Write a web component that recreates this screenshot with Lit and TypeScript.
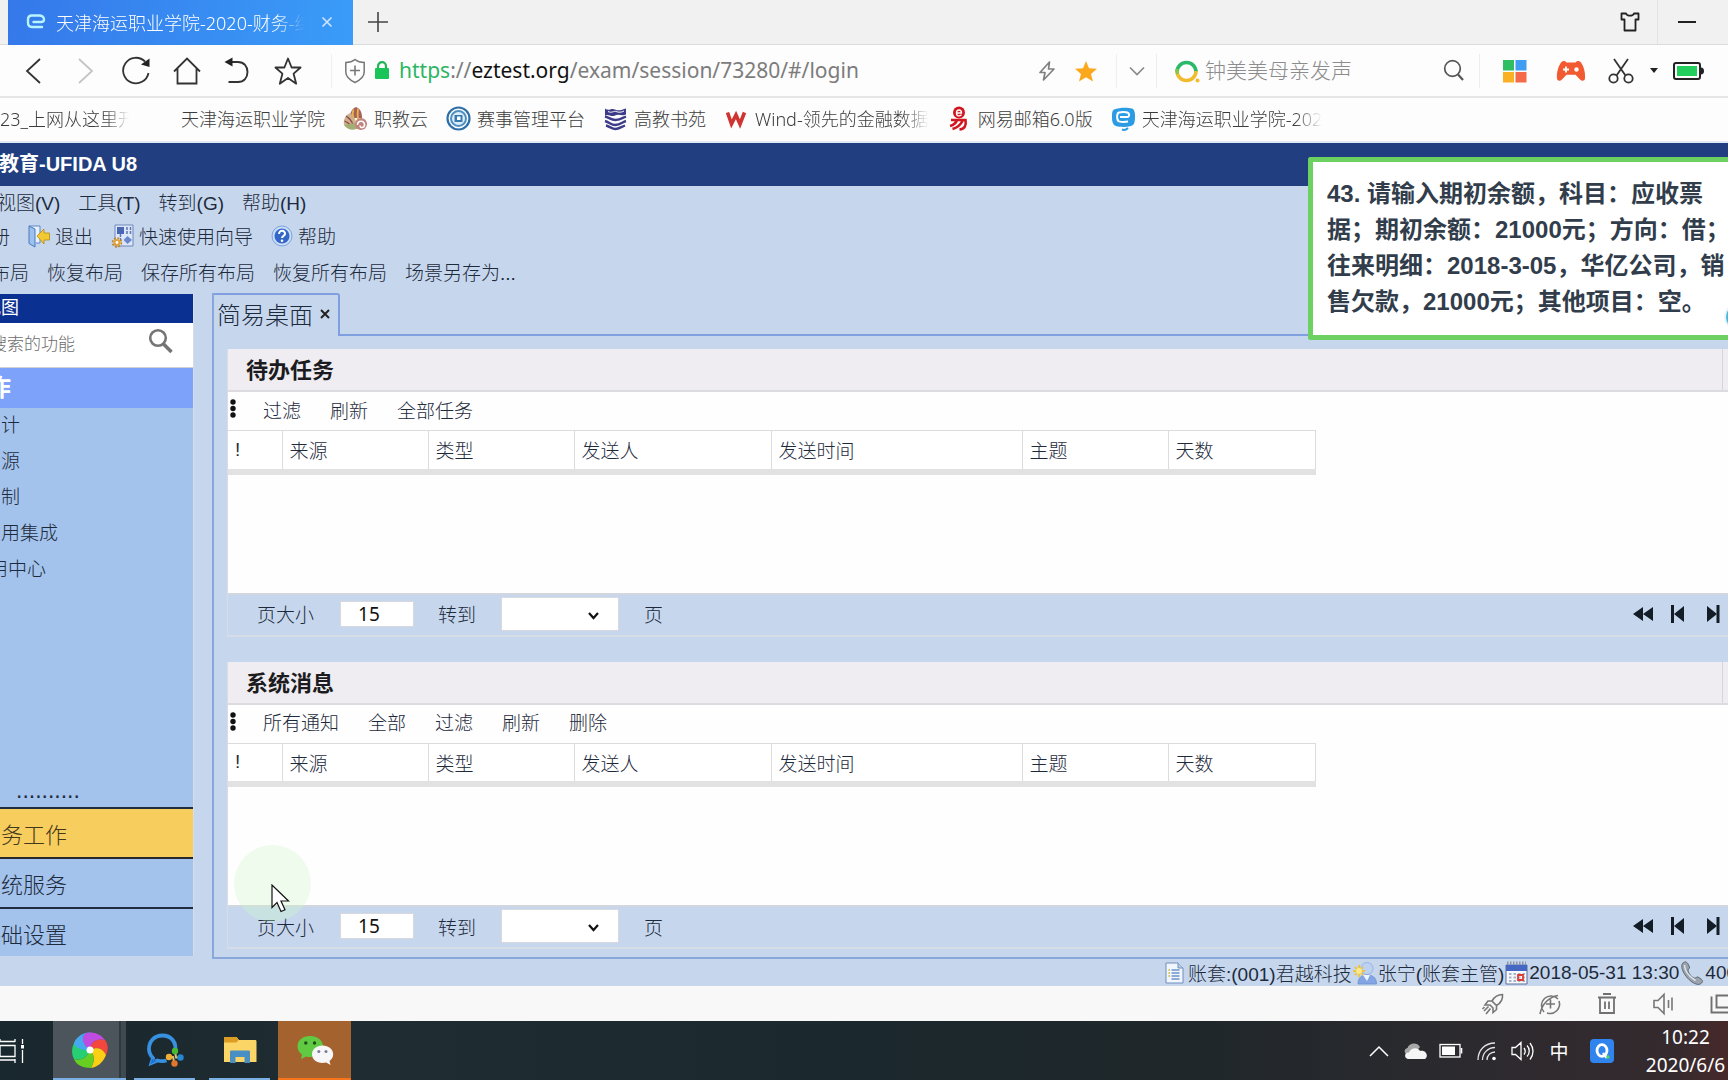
import { LitElement, html, svg, css, nothing } from "lit";
import type { TemplateResult } from "lit";
import { customElement, property } from "lit/decorators.js";

const icon = (w: number, h: number, body: TemplateResult) =>
  html`<svg width=${w} height=${h} viewBox="0 0 ${w} ${h}" fill="none" aria-hidden="true">${body}</svg>`;

const ic = {
  tabLogo: icon(20, 20, svg`<path d="M15 10H7.500M15 10c2.500 0 3-1 3-2.500C18 4.500 16 3.500 13 3.500H6C3 3.500 2 5 2 7.500v3c0 3 1.500 4.500 4 4.500h10" stroke="#b8f4ff" stroke-width="2.400" stroke-linecap="round"/>`),
  close: icon(12, 12, svg`<path d="M1.500 1.500l9 9m0-9l-9 9" stroke="#cfe6ff" stroke-width="1.600"/>`),
  plus: icon(20, 20, svg`<path d="M10 0v20M0 10h20" stroke="#444" stroke-width="1.600"/>`),
  shirt: icon(22, 22, svg`<path d="M7 2.500H2.500v6h3v11h11v-11h3v-6H15c-.5 1.500-2 2.200-4 2.200S7.500 4 7 2.500z" stroke="#222" stroke-width="1.800" stroke-linejoin="round"/>`),
  min: icon(18, 4, svg`<path d="M0 2h18" stroke="#222" stroke-width="2"/>`),
  back: icon(30, 30, svg`<path d="M21 3L8 15l13 12" stroke="#333" stroke-width="1.800"/>`),
  fwd: icon(30, 30, svg`<path d="M9 3l13 12L9 27" stroke="#c4c4c4" stroke-width="1.800"/>`),
  reload: icon(30, 30, svg`<path d="M27.500 17A12.800 12.800 0 1 1 24 5.500" stroke="#333" stroke-width="1.800"/><path d="M20 8.500l8.500-6v8.500z" fill="#222"/>`),
  home: icon(30, 30, svg`<path d="M2 15.500L15 2.500l13 13M5.500 12.500v15h19v-15" stroke="#333" stroke-width="1.800"/>`),
  undo: icon(30, 30, svg`<path d="M6 6h9c6 0 9.500 4.500 9.500 10s-3.500 10-9.500 10H5.500" stroke="#333" stroke-width="1.900"/><path d="M1.500 6L9.500 1.500v9z" fill="#222"/>`),
  star: icon(30, 30, svg`<path d="M14 2.500l3.600 9h9l-7 6.200 2.600 10-8.200-5.700-8.200 5.700 2.600-10-7-6.200h9z" stroke="#333" stroke-width="1.800" stroke-linejoin="round"/>`),
  shield: icon(22, 26, svg`<path d="M11 1.500c2.500 2 6 3 9.200 3v9.500c0 5-5 8.500-9.200 10.500-4.200-2-9.200-5.500-9.200-10.500V4.500c3.200 0 6.700-1 9.200-3z" stroke="#777" stroke-width="1.500"/><path d="M11 7.500v10M6 12.500h10" stroke="#777" stroke-width="1.600"/>`),
  lock: icon(16, 20, svg`<path d="M4 9V6.200a4 4 0 0 1 8 0V9" stroke="#22b457" stroke-width="2.200"/><rect x="1" y="8" width="14" height="11" rx="1" fill="#19c458"/>`),
  bolt: icon(20, 22, svg`<path d="M12.500 2L3 12.500h5L6.500 20 17 9h-5.500z" stroke="#808080" stroke-width="1.700" stroke-linejoin="round"/>`),
  starFull: icon(24, 22, svg`<path d="M12 1l3 7.300 8 .5-6 5.100 2 7.600-7-4.300-7 4.300 2-7.600-6-5.100 8-.5z" fill="#fba81f"/>`),
  chev: icon(16, 10, svg`<path d="M1 1.500l7 7 7-7" stroke="#8a8a8a" stroke-width="1.700"/>`),
  so: icon(26, 26, svg`<path d="M3 14a9.500 9.500 0 1 1 19 0" stroke="#2cb86a" stroke-width="3.600"/><path d="M3 13a9.500 9.500 0 0 0 19 0" stroke="#f2bb2e" stroke-width="3.600"/><path d="M3.500 16a9.500 9.500 0 0 1-.2-5" stroke="#7fca4a" stroke-width="3"/><circle cx="23.500" cy="22.500" r="2" fill="#f2bb2e"/>`),
  mag: icon(22, 24, svg`<circle cx="9.500" cy="9.500" r="7.800" stroke="#555" stroke-width="1.700"/><path d="M15 15.500l5 5.500" stroke="#555" stroke-width="2.200"/>`),
  win: icon(24, 24, svg`<path d="M0 1h11v10.500H0z" fill="#2fbf62"/><path d="M12.500 1h11v10.500h-11z" fill="#3f9df2"/><path d="M0 13h11v10.500H0z" fill="#fbb124"/><path d="M12.500 13h11v10.500h-11z" fill="#f56b49"/>`),
  pad: icon(30, 22, svg`<path d="M5 2.500C7 .5 9 .7 10.500 2.500h9C21 .7 23 .5 25 2.500c3 4 4.500 11 4 16-.3 2.500-3 3-5 1l-4.500-4.700h-9L6 19.500c-2 2-4.700 1.500-5-1-.5-5 1-12 4-16z" fill="#f25a31"/><path d="M10 6.500v6M7 9.500h6" stroke="#fff" stroke-width="1.800"/><circle cx="20.500" cy="9.500" r="2.200" fill="#fff"/>`),
  cut: icon(26, 26, svg`<path d="M6 1l11.500 16.500M20 1L8.500 17.500" stroke="#333" stroke-width="1.800"/><circle cx="5.500" cy="20.500" r="4.200" stroke="#333" stroke-width="1.800"/><circle cx="20.500" cy="20.500" r="4.200" stroke="#333" stroke-width="1.800"/>`),
  caret: icon(8, 5, svg`<path d="M0 0h8L4 5z" fill="#222"/>`),
  batt: icon(32, 18, svg`<rect x="1" y="1" width="26" height="16" rx="2" stroke="#222" stroke-width="2"/><rect x="4" y="4" width="20" height="10" fill="#23cf5c"/><path d="M28 5.500c2 0 3 1.500 3 3.500s-1 3.500-3 3.500z" fill="#222"/>`),
  shell: icon(25, 25, svg`<path d="M13 1c4 1.500 6 5 6 11H8C6 7 9 3 13 1z" fill="#a8605a"/><path d="M10.500 3.500C9 8 10 12 12 15M15 2.500c-.5 5-.5 8 0 11" stroke="#e8b54a" stroke-width="1.800"/><path d="M8 7C3 8 0 13 1 19l9 3 3-6z" fill="#cdb089"/><path d="M3 10c3 2 6 5 7 9M1.500 15c3 1 5 3 7 5" stroke="#8b4250" stroke-width="1.200"/><path d="M1 19c3 5 10 6 14 3l-3-5z" fill="#a3ad74"/><circle cx="18" cy="18" r="6" fill="#c1837a"/><path d="M14.500 19c0-5 7-5 7 0 0 3-4.500 3.500-4.500.5" stroke="#fff" stroke-width="1.600"/>`),
  seal: icon(25, 25, svg`<circle cx="12.500" cy="12.500" r="11" stroke="#2f6fa8" stroke-width="2.200"/><circle cx="12.500" cy="12.500" r="7.500" fill="#dceefa" stroke="#4f8fc2" stroke-width="2"/><path d="M8.500 9h8v7h-8z" fill="#3a78b0"/><path d="M11 10.500h3.500v3.500H11z" fill="#fff"/>`),
  books: icon(25, 25, svg`<path d="M2 2.500c4 3 6-1 10 1s7 0 11-1v6c-4 2-7-1-11 1s-6-2-10 0z" fill="#3d3c8a"/><path d="M5 5.500c4 2 6-1 8 0s6 1 8-.500" stroke="#fff" stroke-width="1"/><path d="M2 10.500c4 1 6 3.500 10.500 3.500s7-2 10.500-3.500M2 15c4 1 6 4 10.500 4s7-3 10.500-4M3 19.500c4 1 6 3.500 9.500 3.500S18 21 22 19.500" stroke="#3d3c8a" stroke-width="2.400"/>`),
  wind: icon(25, 25, svg`<path d="M3.500 6.500l4 11.500L12 9l4 9 4.500-11.500" stroke="#cf3430" stroke-width="3.600"/>`),
  mail: icon(25, 25, svg`<circle cx="12" cy="6.500" r="6" fill="#d2161f"/><path d="M9.500 7h5c0-4-5-4-5 0s3.500 3 5 1.800" stroke="#fff" stroke-width="1.400"/><path d="M4 14h14.500c1 6-1 9-6 9.500M10 14c-1 3-3 5-7 6M15.500 15c-2 4-5 6.500-10 8" stroke="#d2161f" stroke-width="2.600"/>`),
  ez: icon(25, 25, svg`<path d="M3 3.500c5-2 13-2.500 18-1 2 .8 3 3 3 8 0 6-1 8.500-4 9.500-5 1.200-11 1.200-15 0-3-1-4-4-4-9C1 7 1 4.500 3 3.500z" fill="#2b9ce4"/><path d="M16 11H9m7 0c3 0 3-4.500-1-4.800-3-.2-5-.2-7 .2-2.500.5-2.500 8 0 9 2.500.700 6 .7 9 .2" stroke="#fff" stroke-width="2"/><path d="M11 23.500c2 .8 4.500 0 6-1.500" stroke="#2b9ce4" stroke-width="2"/>`),
  exit: icon(22, 24, svg`<path d="M1 2h11v17H8" fill="#e8f1fc" stroke="#5a86c8"/><path d="M1 2l6 3v18l-6-3.500z" fill="#9cc1ee" stroke="#4a78be"/><path d="M9 12l7-7v4h5.500v7H16v4z" fill="#f3c931" stroke="#b68a12" stroke-width=".8"/>`),
  guide: icon(23, 24, svg`<path d="M4 1h18v21H4z" fill="#dce7f8" stroke="#6d87b8"/><path d="M6 3h7v7H6z" fill="#4b66b4"/><path d="M16 3v8M19.500 3v8M9.500 10v6" stroke="#5c76b8" stroke-width="1.500" stroke-dasharray="3 1"/><path d="M16.500 12l4.500 4-4.500 4-4-4z" fill="#6b86cf"/><circle cx="6" cy="18.500" r="3.600" fill="#e0a33a"/><circle cx="6" cy="18.500" r="4.500" stroke="#c08428" stroke-width="1.600" stroke-dasharray="2 1.500"/><circle cx="6" cy="18.500" r="1.400" fill="#fff"/>`),
  help: icon(22, 22, svg`<circle cx="11" cy="11" r="10" fill="#c9dcf8" stroke="#7ea3dd"/><circle cx="11" cy="11" r="7.500" fill="#3467c8"/><path d="M8 9c0-4.500 6.500-4 6 0-.3 2-3 2-3 4" stroke="#fff" stroke-width="2"/><circle cx="11" cy="15.700" r="1.300" fill="#fff"/>`),
  find: icon(26, 26, svg`<circle cx="10" cy="10" r="7.800" stroke="#757575" stroke-width="2.600"/><path d="M15.500 16l8 8" stroke="#757575" stroke-width="3.600"/>`),
  dots: icon(6, 20, svg`<circle cx="3" cy="3" r="2.700" fill="#111"/><circle cx="3" cy="9.500" r="2.700" fill="#111"/><circle cx="3" cy="16" r="2.700" fill="#111"/>`),
  rew: icon(20, 16, svg`<path d="M10 1v14L0 8zM20 1v14L10 8z" fill="#141c26"/>`),
  prev: icon(14, 18, svg`<path d="M0 0h3v18H0z" fill="#141c26"/><path d="M13 1v16L3 9z" fill="#141c26"/>`),
  next: icon(14, 18, svg`<path d="M10.500 0h3v18h-3z" fill="#141c26"/><path d="M1 1v16l10-8z" fill="#141c26"/>`),
  doc: icon(19, 22, svg`<path d="M1 1h12l5 5v15H1z" fill="#f1f6fd" stroke="#6f8fbd"/><path d="M13 1v5h5" fill="#b9cdea" stroke="#6f8fbd"/><path d="M6.500 8h8M6.500 11h8M6.500 14h8M6.500 17h8" stroke="#6d92ca" stroke-width="1.400"/><path d="M3.500 8h1.500M3.500 11h1.500M3.500 14h1.500" stroke="#cfae2b" stroke-width="1.500"/>`),
  user: icon(24, 24, svg`<circle cx="14" cy="7.500" r="6" fill="#bdd2f3" stroke="#8fabd8" stroke-width=".8"/><path d="M5 23c0-7 4-9 9-9s9.500 2 9.500 9z" fill="#84a5e4" stroke="#6f90cc" stroke-width=".8"/><path d="M10 14l4 6 3-6z" fill="#eef4ff"/><path d="M6 4v12M0 10h12M2 6l8 8m0-8l-8 8" stroke="#ecc43d" stroke-width="1.800"/><circle cx="6" cy="10" r="3" fill="#fbe78d"/>`),
  cal: icon(23, 24, svg`<path d="M1 4h21v19H1z" fill="#f6f8fc" stroke="#5c6f9c"/><path d="M1 4h21v6H1z" fill="#4468c4"/><path d="M2 2h19" stroke="#8c94a8" stroke-width="3" stroke-dasharray="1.500 1.500"/><path d="M4 13h16M4 16.500h16M4 20h16" stroke="#a8b3c9" stroke-width="2" stroke-dasharray="2.500 2"/><path d="M13 14h5v5h-5z" stroke="#dc3f32" stroke-width="1.800"/>`),
  phone: icon(24, 24, svg`<path d="M3 2c2-2 4-1 5 1l1.500 3c.5 1.500-2 2-1.500 4 1 3 3 5.500 6 7 2 .6 2.500-1.500 4-1l3 2c2 1.500 2 3 0 4.500-3 2.500-9-.5-13.500-5.500C3 12 0 5 3 2z" fill="#9ba4ae" stroke="#5e6873"/><path d="M4.500 4c0 5 4 11 11 15.500" stroke="#dde3e8" stroke-width="1.500"/>`),
  rocket: icon(24, 24, svg`<path d="M21.500 2.500c-5 0-8 2-10.500 6.500l4.500 4.500c4.500-2.500 6.500-5.500 6-11zM11 9H7L4 13h5l3 3v4.500l3.500-3v-4M7.500 14.500L3 19m6.500-2.500L5 22m-1.500-7l-2 2" stroke="#777" stroke-width="1.600"/>`),
  gauge: icon(24, 24, svg`<path d="M6 20a9.500 9.500 0 1 1 14-13M21 9A9.500 9.500 0 0 1 9 21M2 22C4 12 11 5 20 3.500M12.500 7.500v9M8 12h9" stroke="#777" stroke-width="1.600"/>`),
  trash: icon(20, 24, svg`<path d="M1 5.500h18M6 2h8M3 5.500V21h14V5.500M8 9.500v7.500M12 9.500v7.500" stroke="#707070" stroke-width="1.800"/>`),
  vol: icon(24, 24, svg`<path d="M2 8.500h4l6-6v19l-6-6H2zM16.500 8v8M20 5.500v13" stroke="#777" stroke-width="1.600"/>`),
  wins: icon(18, 24, svg`<path d="M1.500 4.500v16H18M6.500 3.500H18M6.500 2.500v13H18" stroke="#707070" stroke-width="1.900"/>`),
  taskview: icon(26, 28, svg`<path d="M0 8.500h15v11H0zM0 5v-3m15 3v-3M0 4.500h15M0 23h15M15 22v4M22.500 2v5M22.500 13v13" stroke="#fff" stroke-width="1.300"/><path d="M21 8h3v3.500h-3z" fill="#fff"/>`),
  swirl: icon(38, 38, svg`
    <path d="M19 19C7 18 3 10 10 4 14 1 19 1 22 2 14 5 13 12 19 19z" fill="#3d9ee8"/>
    <path d="M19 19C12 14 9 7 15 2c7-2 15 1 19 7-8-2-14 1-15 10z" fill="#c04be0"/>
    <path d="M19 19c1-9 7-12 15-10 4 5 3 11 1 15-3-6-8-9-16-5z" fill="#f5453f"/>
    <path d="M19 19c8-4 13-1 16 5-3 8-9 12-15 13 3-6 5-11-1-18z" fill="#fbcf13"/>
    <path d="M19 19c6 7 4 12 1 18C12 37 5 34 3 28c7 2 13-1 16-9z" fill="#66cf22"/>
    <path d="M19 19C16 27 10 30 3 28-1 20 2 13 5 9c0 6 5 11 14 10z" fill="#25cf72"/>
    <path d="M19 19C10 20 3 16 3 12c2-5 5-7 9-9-2 6 1 12 7 16z" fill="#46a9ee"/><circle cx="19" cy="19" r="3.500" fill="#fff"/>`),
  wecom: icon(38, 36, svg`<path d="M29 19.500C31 10 25 3.500 16.500 3.500S3 9.500 3 17c0 4 1.500 6.500 4 9l-1.500 5 6-2.500c2.500.7 6 .9 9 0" stroke="#3791e0" stroke-width="3.800"/><path d="M6 27l-1.500 5 6-3z" fill="#1d6fd0"/><path d="M29 19l1 6.500h5M28.500 31.500L27 25h-4" stroke="#d6c26f" stroke-width="2"/><circle cx="29" cy="19" r="3.200" fill="#49b834"/><circle cx="34.500" cy="25.500" r="3.200" fill="#2387d2"/><circle cx="28.500" cy="31.500" r="3.200" fill="#e2762d"/><circle cx="23" cy="25" r="3.200" fill="#efae35"/>`),
  folder: icon(34, 28, svg`<path d="M1 2.500C1 1.500 1.500 1 2.500 1h11l2.500 3h16c1 0 1.500.5 1.500 1.500V26H1z" fill="#fbd565"/><path d="M1 2.500C1 1.500 1.500 1 2.500 1h11l2 3-2 2.500H1z" fill="#dd9c24"/><path d="M7 27V16c0-1 .5-1.500 1.500-1.500h17c1 0 1.500.5 1.500 1.500v11h-5.500v-6h-9v6z" fill="#4a8fc4"/>`),
  wechat: icon(38, 32, svg`<path d="M14 2C6.500 2 1.500 6.500 1.500 12.500c0 3.500 2 6.200 4.500 8L5 25l5-2.500c8 2 17-2 17-10C27 6.500 21.500 2 14 2z" fill="#60cb42"/><circle cx="9.800" cy="9" r="1.700" fill="#1f4d1b"/><circle cx="18.500" cy="9" r="1.700" fill="#1f4d1b"/><path d="M26.500 11.500c-6 0-10.500 3.800-10.500 8.800s4.500 8.700 10.500 8.700c1.500 0 2.500-.2 3.700-.5l4.300 2.500-1-4c2.300-1.600 3.700-4 3.700-6.700 0-5-4.700-8.800-10.700-8.800z" fill="#f7f7f9"/><circle cx="22.800" cy="17.500" r="1.500" fill="#7c7e90"/><circle cx="30" cy="17.500" r="1.500" fill="#7c7e90"/>`),
  up: icon(20, 12, svg`<path d="M1 11l9-9 9 9" stroke="#fff" stroke-width="1.500"/>`),
  cloud: icon(26, 18, svg`<path d="M7 13c-5 0-6-6-1.500-7C7 1 15-.5 18 5l-7 8z" fill="#a7a7a7"/><path d="M6 17c-4.500-1-3.500-7 1-6.500C9 5.500 16 5 18 9c6-1.500 9 5 5 8z" fill="#f5f5f5"/>`),
  bat2: icon(24, 16, svg`<rect x="1" y="1.500" width="20" height="12.500" stroke="#fff" stroke-width="1.300"/><path d="M3 3.500h13v8.500H3z" fill="#fff"/><path d="M22.500 5v5.500" stroke="#fff" stroke-width="1.600"/>`),
  wifi: icon(20, 20, svg`<path d="M1 19C1 9 8 2 18 2M5.500 19C5.500 12 11 6.500 18 6.500M10 19c0-4.500 3.500-8 8-8" stroke="#e4e4e4" stroke-width="1.300"/><circle cx="17" cy="17.500" r="1.800" fill="#fff"/>`),
  spk: icon(24, 20, svg`<path d="M1 6.500h3.500L10 1.500v17l-5.500-5H1zM13 7c1.500 2 1.500 4.500 0 6.500M16 4.500c3 3 3 8 0 11M19 2c4 5 4 11.500 0 16.500" stroke="#fff" stroke-width="1.300"/>`),
  qq: icon(24, 24, svg`<rect width="24" height="24" rx="4" fill="#2f84ee"/><ellipse cx="12" cy="11.500" rx="5" ry="5.800" stroke="#fff" stroke-width="2.800"/><path d="M13 14l4 5" stroke="#fff" stroke-width="2.500"/><circle cx="18" cy="18" r="1.800" fill="#4dd264"/>`),
  cursor: icon(20, 30, svg`<path d="M1 1v22.500l5-5 4 9 4-1.800-4-8.700h7.500z" fill="#fff" stroke="#111" stroke-width="1.200"/>`),
};

interface Column { label: string; width: number }
const columns: Column[] = [
  { label: "!", width: 54 },
  { label: "来源", width: 146 },
  { label: "类型", width: 146 },
  { label: "发送人", width: 197 },
  { label: "发送时间", width: 251 },
  { label: "主题", width: 146 },
  { label: "天数", width: 147 },
];

@customElement("message-panel")
export class MessagePanel extends LitElement {
  @property() heading = "";
  @property({ type: Array }) actions: string[] = [];

  static styles = css`
    :host { display: block; background: #fefefe; border-left: 1px solid #d9dde6; }
    * { box-sizing: border-box; }
    button, input, select { font: inherit; color: inherit; border: 0; padding: 0; margin: 0; background: none; border-radius: 0; }
    svg { display: block; }
    .head { display: flex; height: 43px; background: #efedf2; border-bottom: 2px solid #dcdbe0; }
    h2 { flex: 1; margin: 0; padding-left: 18px; font-size: 22px; line-height: 44px; font-weight: 700; color: #1b1b20; }
    .edge { width: 6px; border-left: 1px solid #d6d5da; }
    .tools { display: flex; align-items: center; height: 38px; gap: 29px; padding: 0 0 4px; }
    .tools svg { margin-left: 2px; margin-right: -2px; }
    table { border-collapse: collapse; table-layout: fixed; background: #fff; }
    th { height: 41px; padding: 0 7px; font-weight: 300; text-align: left; border: 1px solid #dcdcdc; border-left: 0; border-bottom: 6px solid #e2e2e2; }
    .rows { height: 118px; }
    .pager { display: flex; align-items: center; height: 44px; padding: 0 0 2px 29px; background: #c6d7ed; border-top: 2px solid #d2d6de; border-bottom: 2px solid #d6dde6; color: #1d2a3c; }
    .pager input { width: 74px; height: 26px; margin: 0 24px 0 26px; padding-left: 17px; background: #fff; border: 1px solid #d8d8de; color: #111; font-family: "Noto Sans", sans-serif; font-weight: 400; }
    .pick { position: relative; margin: 0 25px; }
    .pick select { display: block; appearance: none; width: 118px; height: 34px; background: #fff; border: 1px solid #d8d8de; }
    .pick svg { position: absolute; right: 20px; top: 15px; pointer-events: none; }
    .nav { display: flex; margin-left: auto; margin-right: -2px; }
    .nav button { display: grid; place-items: center; width: 35px; height: 34px; }
  `;

  render() {
    return html`
      <div class="head"><h2>${this.heading}</h2><span class="edge"></span></div>
      <div class="tools">${ic.dots}${this.actions.map((a) => html`<button>${a}</button>`)}</div>
      <table>
        <colgroup>${columns.map((c) => html`<col style="width:${c.width}px" />`)}</colgroup>
        <thead><tr>${columns.map((c) => html`<th scope="col">${c.label}</th>`)}</tr></thead>
      </table>
      <div class="rows"></div>
      <div class="pager">
        <label for="size">页大小</label><input id="size" value="15" />
        <label for="goto">转到</label>
        <span class="pick">
          <select id="goto"><option></option></select>
          ${icon(11, 8, svg`<path d="M1 1l4.500 5L10 1" stroke="#111" stroke-width="2.200"/>`)}
        </span>
        <span>页</span>
        <span class="nav">
          <button aria-label="首页">${ic.rew}</button>
          <button aria-label="上一页">${ic.prev}</button>
          <button aria-label="下一页">${ic.next}</button>
        </span>
      </div>`;
  }
}

const bookmarks: { text: string; glyph?: TemplateResult; fade?: boolean }[] = [
  { text: "天津海运职业学院" },
  { text: "职教云", glyph: ic.shell },
  { text: "赛事管理平台", glyph: ic.seal },
  { text: "高教书苑", glyph: ic.books },
  { text: "Wind-领先的金融数据", glyph: ic.wind, fade: true },
  { text: "网易邮箱6.0版", glyph: ic.mail },
  { text: "天津海运职业学院-202", glyph: ic.ez, fade: true },
];

@customElement("app-root")
export class AppRoot extends LitElement {
  static styles = css`
    :host {
      display: block; position: relative; overflow: hidden;
      font-family: "Liberation Sans", "Noto Sans CJK SC", sans-serif;
      font-size: 19px; font-weight: 300; color: #222; white-space: nowrap;
    }
    * { box-sizing: border-box; }
    svg { display: block; flex: none; }
    a { color: inherit; text-decoration: none; }
    button, input { font: inherit; color: inherit; border: 0; padding: 0; margin: 0; background: none; border-radius: 0; }
    .chrome { font-family: "Noto Sans", "Noto Sans CJK SC", sans-serif; }

    .tabs { display: flex; align-items: center; height: 45px; padding-left: 8px; background: #f1f1f1; border-bottom: 1px solid #dcdcdc; }
    .tab { display: flex; align-items: center; width: 345px; height: 45px; padding: 0 20px 0 18px; font-size: 18px; color: #fff; background: linear-gradient(100deg, #3578ea, #3a9cf8); }
    .tab .label { flex: 1; overflow: hidden; margin: 0 16px 0 10px; mask-image: linear-gradient(90deg, #000 88%, transparent); }
    .new { margin-left: 15px; }
    .winctl { display: flex; align-items: center; margin-left: auto; }
    .winctl button { display: grid; place-items: center; width: 54px; height: 44px; }
    .winctl button + button { width: 71px; padding-right: 12px; border-left: 1px solid #e4e4e4; }

    .bar { display: flex; align-items: center; height: 53px; padding-left: 8px; background: #fdfdfd; border-bottom: 2px solid #e6e6e6; }
    .bar > button { display: grid; place-items: center; width: 51px; height: 50px; }
    .address { flex: 1; display: flex; align-items: center; height: 34px; margin-left: 17px; padding-left: 12px; border-left: 1px solid #f0f0f0; }
    .url { flex: 1; margin-left: 9px; padding-bottom: 2px; font-size: 21px; font-weight: 400; color: #7c7c7c; }
    .url i { font-style: normal; color: #2bb563; }
    .url b { font-weight: 400; color: #111; }
    .address .lock { margin: 0 0 2px 8px; }
    .address button { display: grid; place-items: center; width: 39px; height: 34px; }
    .address .more { width: 40px; margin-left: 11px; border-left: 1px solid #f0f0f0; }
    .search { display: flex; align-items: center; width: 324px; height: 34px; padding: 0 14px 0 17px; border: 1px solid #ededed; border-width: 0 1px; }
    .search input { flex: 1; min-width: 0; margin-left: 5px; padding-bottom: 2px; font-size: 21px; }
    .search input::placeholder { color: #8c8c8c; opacity: 1; }
    .ext { display: flex; align-items: center; width: 248px; }
    .ext button { display: grid; place-items: center; width: 58px; height: 34px; }
    .ext .wide { width: 70px; }
    .ext .game { width: 42px; }
    .ext .drop { width: 8px; }
    .ext .battery { width: 62px; }

    .marks { display: flex; align-items: center; gap: 18px; height: 43px; padding-bottom: 3px; background: #fdfdfd; font-size: 18px; color: #3c3c3c; }
    .marks a { display: flex; align-items: center; gap: 6px; }
    .marks .blank { width: 25px; }
    .marks .first { width: 132px; overflow: hidden; mask-image: linear-gradient(90deg, #000 80%, transparent 98%); }
    .fade { overflow: hidden; mask-image: linear-gradient(90deg, #000 85%, transparent); }

    .work { margin-left: -24px; background: #c6d7ed; color: #1d2a3c; }
    .title { margin: 0; padding-left: 23px; height: 45px; font-size: 20px; line-height: 42px; font-weight: 700; color: #fff; background: #213f80; border-top: 2px solid #dfe8f5; }
    .menu { display: flex; align-items: center; gap: 18px; height: 34px; padding: 0 0 3px 21px; }
    .menu.sub { padding-left: 15px; }
    .menu.low { height: 39px; padding-bottom: 4px; }
    .menu button { display: flex; align-items: center; gap: 5px; }
    .body { display: flex; gap: 18px; }

    .side { display: flex; flex-direction: column; width: 218px; height: 662px; margin-top: 1px; background: #a3c3ec; border-right: 1px solid #d6dde6; }
    .side h2 { margin: 0; padding-left: 7px; height: 29px; font-size: 18px; line-height: 28px; font-weight: 400; color: #fff; background: #0a3092; }
    .find { display: flex; align-items: center; height: 45px; padding: 0 19px 0 14px; background: #fff; border-bottom: 1px solid #cfcfd4; }
    .find input { flex: 1; min-width: 0; font-size: 17px; }
    .find input::placeholder { color: #6c6c6c; opacity: 1; }
    .find svg { margin-bottom: 8px; }
    .group { padding-left: 11px; height: 40px; font-size: 24px; line-height: 38px; font-weight: 700; color: #fff; background: #7ca3f9; text-align: left; }
    ul { list-style: none; margin: 0; padding: 0 0 0 25px; line-height: 36px; flex: 1; }
    .leaf { margin-left: -12px; }
    .dots { padding-left: 40px; font-size: 23px; line-height: 30px; height: 32px; font-weight: 400; }
    .side .nav { height: 49px; padding-left: 3px; font-size: 22px; text-align: left; border-top: 2px solid #1f2d40; }
    .side .nav.on { height: 52px; background: #f7cd5e; color: #43371c; border-bottom: 2px solid #26282c; }
    .side .nav.on + .nav { height: 48px; border-top: 0; }

    .main { flex: 1; min-width: 0; padding-bottom: 8px; border: 2px solid #8aa7dc; border-width: 0 0 2px 2px; }
    .strip { display: flex; height: 43px; }
    .desk { display: flex; align-items: center; gap: 7px; width: 126px; padding: 0 0 4px 3px; font-size: 24px; border: 2px solid #7f9fe0; border-width: 2px 2px 0 0; border-radius: 0 3px 0 0; }
    .rule { flex: 1; border-bottom: 2px solid #7f9fe0; }
    .panels { display: flex; flex-direction: column; gap: 25px; padding: 13px 0 0 13px; }

    .status { display: flex; align-items: center; height: 27px; padding-left: 1189px; }
    .status span { margin: 0 1px 0 4px; }
    .status span.near { margin-left: 1px; }

    .foot { display: flex; align-items: center; justify-content: flex-end; height: 35px; background: #f8f8f9; }
    .foot button { display: grid; place-items: center; width: 57px; height: 35px; }
    .foot .last { width: 36px; justify-items: end; }

    .task { display: flex; align-items: stretch; height: 60px; color: #fff; background: linear-gradient(90deg, #19272e, #1f2c31 20%, #1b282d 50%, #20272a 70%, #2c2a2f 85%, #352a2e 97%, #48292a); }
    .task .view { width: 53px; }
    .task button { display: grid; align-items: center; }
    .app { justify-items: center; border-bottom: 3px solid #7bb0e4; }
    .a1 { width: 73px; background: linear-gradient(90deg, #4b555b 66px, #2e3a40 66px, #2e3a40 68px, #3f4a50 68px); }
    .a2 { width: 61px; margin-left: 8px; }
    .a3 { width: 61px; margin-left: 14px; }
    .a4 { width: 73px; margin-left: 8px; background: #a4622f; border-color: #f8741b; }
    .tray { display: flex; align-items: center; margin-left: auto; }
    .tray button { justify-items: center; width: 36px; height: 60px; }
    .tray .ime { font-size: 19px; font-weight: 400; }
    .tray .q { width: 50px; margin-right: 9px; }
    .clock { width: 99px; margin-right: -7px; text-align: center; line-height: 28px; font-weight: 400; }

    .question { position: absolute; right: 0; top: 157px; width: 420px; height: 183px; padding: 14px 0 0 14px; border: 5px solid #6cd160; border-right: 0; border-radius: 3px 0 0 3px; background: #fff; color: #323d4c; font-size: 24px; line-height: 36px; font-weight: 700; }
    .badge { position: absolute; right: -24px; top: 303px; width: 28px; height: 28px; border-radius: 50%; background: #46b8d8; border: 2px solid #eef3fb; }
    .halo { position: absolute; left: 234px; top: 845px; width: 77px; height: 77px; border-radius: 50%; background: rgba(205, 250, 200, 0.3); }
    .cursor { position: absolute; left: 271px; top: 884px; }
  `;

  render() {
    return html`
      <header class="chrome">
        <div class="tabs">
          <div class="tab">${ic.tabLogo}<span class="label">天津海运职业学院-2020-财务-综</span><button aria-label="关闭">${ic.close}</button></div>
          <button class="new" aria-label="新标签页">${ic.plus}</button>
          <div class="winctl"><button aria-label="皮肤">${ic.shirt}</button><button aria-label="最小化">${ic.min}</button></div>
        </div>
        <div class="bar">
          <button aria-label="后退">${ic.back}</button>
          <button aria-label="前进">${ic.fwd}</button>
          <button aria-label="刷新">${ic.reload}</button>
          <button aria-label="主页">${ic.home}</button>
          <button aria-label="恢复">${ic.undo}</button>
          <button aria-label="收藏">${ic.star}</button>
          <div class="address">
            ${ic.shield}<span class="lock">${ic.lock}</span>
            <span class="url"><i>https</i>://<b>eztest.org</b>/exam/session/73280/#/login</span>
            <button aria-label="加速">${ic.bolt}</button>
            <button aria-label="已收藏">${ic.starFull}</button>
            <button class="more" aria-label="展开">${ic.chev}</button>
          </div>
          <div class="search">${ic.so}<input aria-label="搜索" placeholder="钟美美母亲发声" /><button aria-label="搜索">${ic.mag}</button></div>
          <div class="ext">
            <button class="wide" aria-label="应用">${ic.win}</button>
            <button class="game" aria-label="游戏">${ic.pad}</button>
            <button aria-label="截图">${ic.cut}</button>
            <button class="drop" aria-label="更多">${ic.caret}</button>
            <button class="battery" aria-label="电量">${ic.batt}</button>
          </div>
        </div>
        <nav class="marks">
          <a class="first" href="#">23_上网从这里开</a>
          ${bookmarks.map((b) => html`<a href="#">${b.glyph ?? html`<span class="blank"></span>`}<span class=${b.fade ? "fade" : nothing}>${b.text}</span></a>`)}
        </nav>
      </header>

      <main class="work">
        <h1 class="title">教育-UFIDA U8</h1>
        <div class="menu"><button>视图(V)</button><button>工具(T)</button><button>转到(G)</button><button>帮助(H)</button></div>
        <div class="menu sub"><button>册</button><button>${ic.exit}退出</button><button>${ic.guide}快速使用向导</button><button>${ic.help}帮助</button></div>
        <div class="menu sub low"><button>布局</button><button>恢复布局</button><button>保存所有布局</button><button>恢复所有布局</button><button>场景另存为...</button></div>
        <div class="body">
          <aside class="side">
            <h2>视图</h2>
            <div class="find"><input aria-label="搜索的功能" placeholder="搜索的功能" />${ic.find}</div>
            <button class="group">作</button>
            <ul><li>计</li><li>源</li><li>制</li><li>用集成</li><li class="leaf">用中心</li></ul>
            <div class="dots">..........</div>
            <button class="nav on">业务工作</button>
            <button class="nav">系统服务</button>
            <button class="nav">基础设置</button>
          </aside>
          <section class="main">
            <div class="strip"><div class="desk">简易桌面${icon(10, 10, svg`<path d="M1 1l8 8m0-8l-8 8" stroke="#222" stroke-width="2"/>`)}</div><div class="rule"></div></div>
            <div class="panels">
              <message-panel heading="待办任务" .actions=${["过滤", "刷新", "全部任务"]}></message-panel>
              <message-panel heading="系统消息" .actions=${["所有通知", "全部", "过滤", "刷新", "删除"]}></message-panel>
            </div>
          </section>
        </div>
        <div class="status">
          ${ic.doc}<span>账套:(001)君越科技</span>${ic.user}<span class="near">张宁(账套主管)</span>${ic.cal}<span class="near">2018-05-31 13:30</span>${ic.phone}<span class="near">400</span>
        </div>
      </main>

      <div class="foot">
        <button aria-label="加速">${ic.rocket}</button>
        <button aria-label="浏览器医生">${ic.gauge}</button>
        <button aria-label="清理">${ic.trash}</button>
        <button aria-label="声音">${ic.vol}</button>
        <button class="last" aria-label="窗口">${ic.wins}</button>
      </div>
      <footer class="task chrome">
        <button class="view" aria-label="任务视图">${ic.taskview}</button>
        <button class="app a1" aria-label="浏览器">${ic.swirl}</button>
        <button class="app a2" aria-label="企业微信">${ic.wecom}</button>
        <button class="app a3" aria-label="文件夹">${ic.folder}</button>
        <button class="app a4" aria-label="微信">${ic.wechat}</button>
        <div class="tray">
          <button aria-label="展开">${ic.up}</button>
          <button aria-label="云">${ic.cloud}</button>
          <button aria-label="电池">${ic.bat2}</button>
          <button aria-label="网络">${ic.wifi}</button>
          <button aria-label="音量">${ic.spk}</button>
          <button class="ime">中</button>
          <button class="q" aria-label="助手">${ic.qq}</button>
          <div class="clock">10:22<br />2020/6/6</div>
        </div>
      </footer>

      <div class="question">43. 请输入期初余额，科目：应收票<br />据；期初余额：21000元；方向：借；<br />往来明细：2018-3-05，华亿公司，销<br />售欠款，21000元；其他项目：空。</div>
      <span class="badge"></span>
      <span class="halo"></span>
      <span class="cursor">${ic.cursor}</span>
    `;
  }
}
